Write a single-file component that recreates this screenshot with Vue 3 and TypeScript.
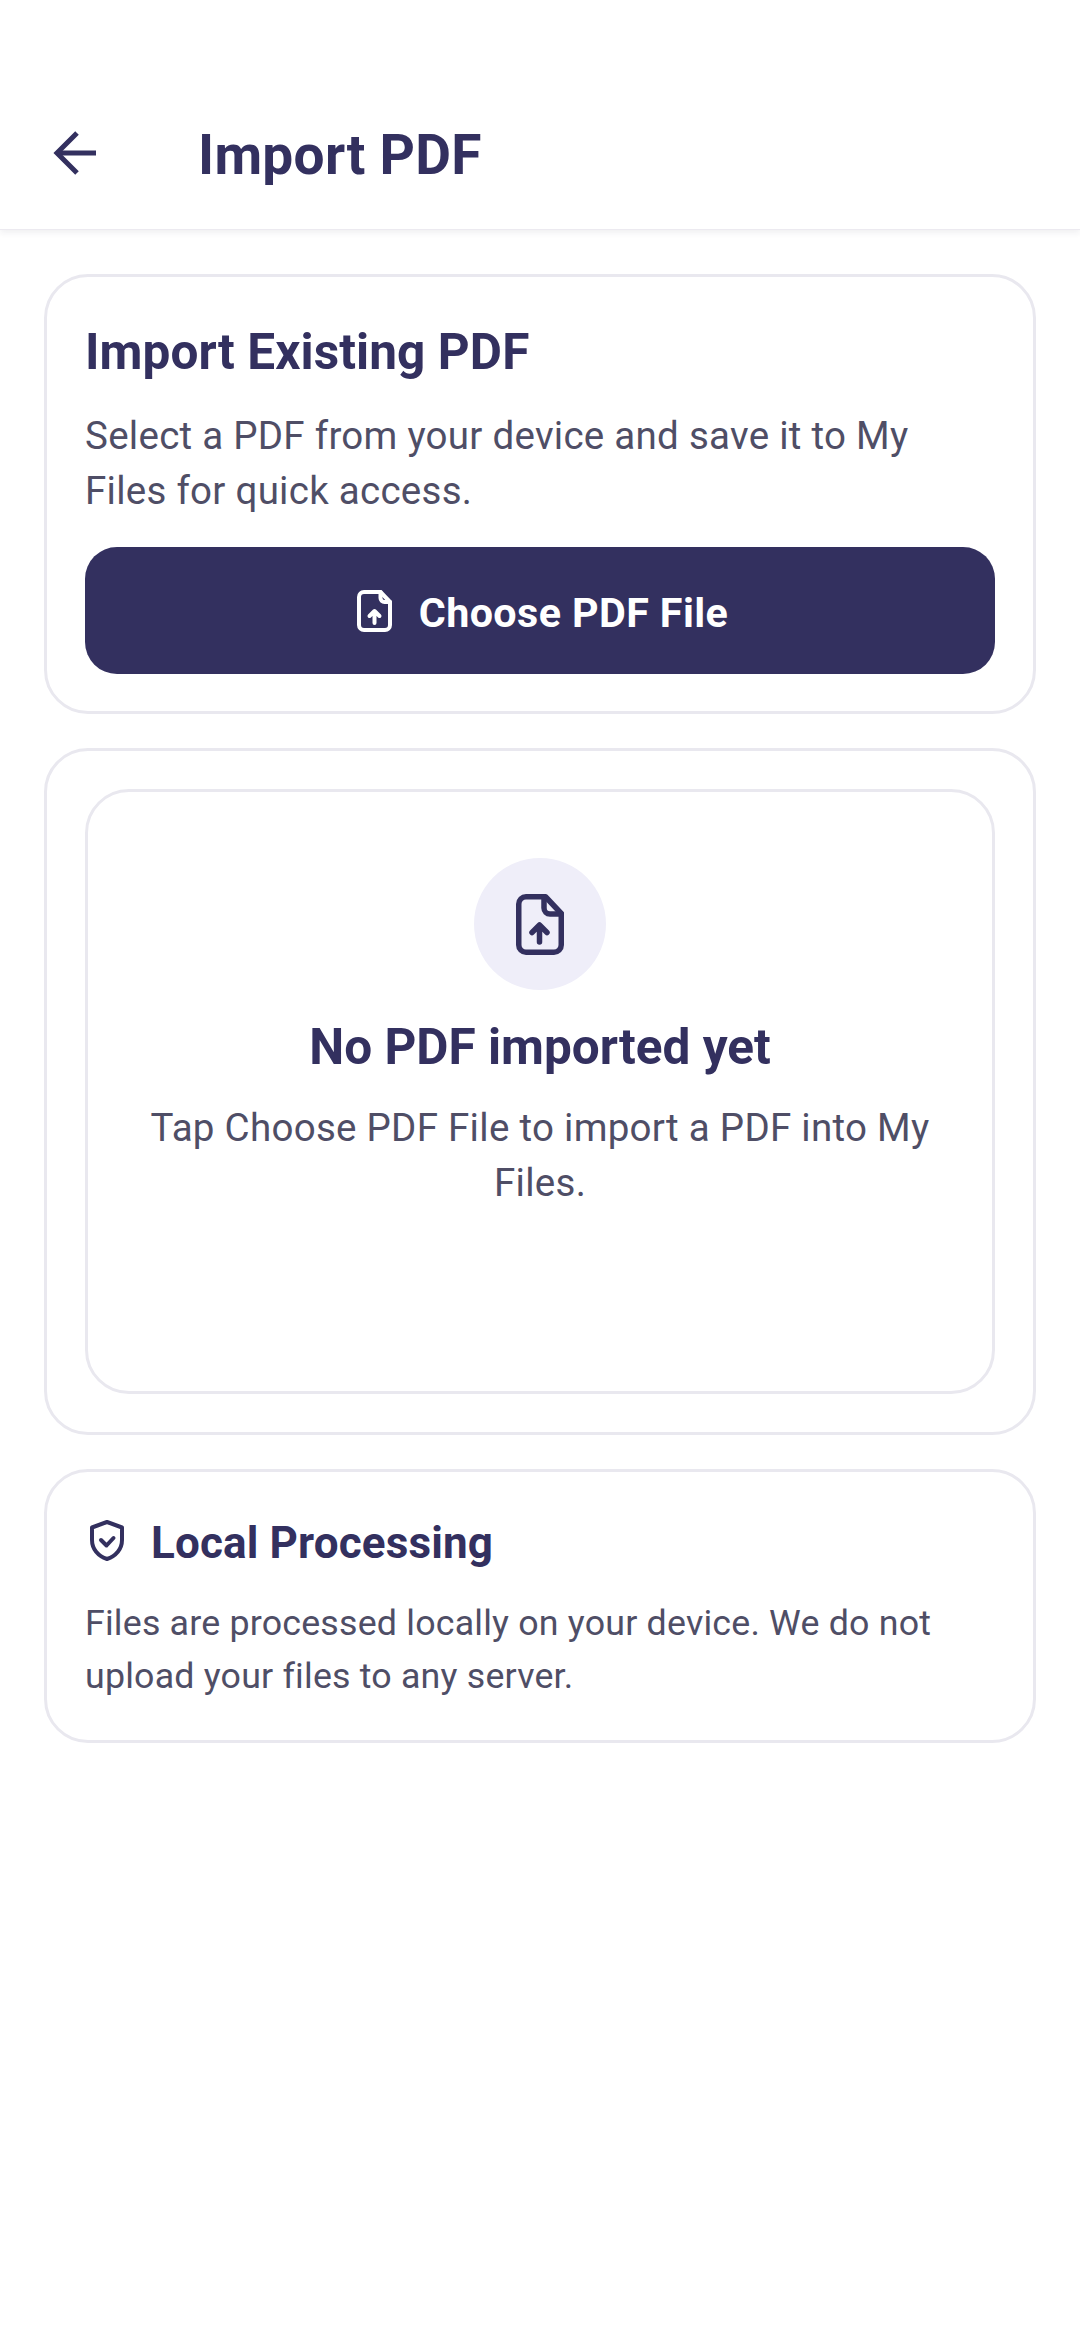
<template>
  <div class="screen">
    <header class="appBar">
      <button class="backBtn" aria-label="Back">
        <svg width="66" height="66" viewBox="0 0 66 66" fill="none" stroke="#33305f" stroke-width="5">
          <path d="M54 33H15" />
          <path d="M35 13 15 33 35 53" />
        </svg>
      </button>
      <h1 class="appBar__title">Import PDF</h1>
    </header>

    <main class="content">
      <section class="card card--import">
        <h2 class="card__title">Import Existing PDF</h2>
        <p class="card__text">Select a PDF from your device and save it to My Files for quick access.</p>
        <button class="primaryBtn">
          <svg width="35" height="42" viewBox="0 0 35 42" fill="none" stroke="#fff" stroke-width="4" stroke-linejoin="round" stroke-linecap="round">
            <path d="M7 2h16.500L33 12v23a5 5 0 0 1-5 5H7a5 5 0 0 1-5-5V7a5 5 0 0 1 5-5Z" />
            <path d="M23.500 2v6a4 4 0 0 0 4 4H33" />
            <path d="M17.500 33V22M12.500 26l5-5 5 5" />
          </svg>
          <span class="primaryBtn__label">Choose PDF File</span>
        </button>
      </section>

      <section class="card">
        <div class="emptyBox">
          <div class="emptyBox__icon">
            <svg width="48" height="61" viewBox="0 0 48 61" fill="none" stroke="#33305f" stroke-width="5.500" stroke-linejoin="round" stroke-linecap="round">
              <path d="M10 2.750h19.500L45.250 19.500V51a7.250 7.250 0 0 1-7.250 7.250H10A7.250 7.250 0 0 1 2.750 51V10A7.250 7.250 0 0 1 10 2.750Z" />
              <path d="M28 2.750V14a6 6 0 0 0 6 6h11.250" />
              <path d="M23.500 48V32M16 38.500l7.500-7.500 7.500 7.500" />
            </svg>
          </div>
          <h2 class="emptyBox__title">No PDF imported yet</h2>
          <p class="emptyBox__text">Tap Choose PDF File to import a PDF into My Files.</p>
        </div>
      </section>

      <section class="card card--info">
        <div class="infoHead">
          <svg class="infoHead__icon" width="34" height="41" viewBox="0 0 34 41" fill="none" stroke="#33305f" stroke-width="4" stroke-linejoin="round" stroke-linecap="round">
            <path d="M17 2 32 7.500V20c0 9-6 16-15 19C8 36 2 29 2 20V7.500Z" />
            <path d="m11 20 5.500 5.500L23.500 18" />
          </svg>
          <h3 class="infoHead__title">Local Processing</h3>
        </div>
        <p class="card__text card__text--small">Files are processed locally on your device. We do not upload your files to any server.</p>
      </section>
    </main>
  </div>
</template>

<script setup lang="ts">
</script>

<style>
html,
body {
  background: #fff;
}
</style>

<style scoped>
.screen {
  width: 1080px;
  height: 2340px;
  background: #fff;
  font-family: Roboto, "Liberation Sans", sans-serif;
  color: #33305f;
}

.appBar {
  display: flex;
  align-items: center;
  height: 230px;
  padding: 76px 0 0 42px;
  box-sizing: border-box;
  background: #fff;
  border-bottom: 1px solid #eceaf0;
  box-shadow: 0 3px 6px rgba(40, 40, 70, 0.07);
}

.backBtn {
  display: flex;
  padding: 0;
  border: 0;
  background: none;
}

.appBar__title {
  margin: 4px 0 0 90px;
  font-size: 55px;
  line-height: 64px;
  letter-spacing: 0.3px;
  font-weight: 700;
}

.content {
  display: flex;
  flex-direction: column;
  gap: 34px;
  padding: 44px 44px 0;
}

.card {
  padding: 38px;
  border: 3px solid #e9e8ef;
  border-radius: 44px;
  background: #fff;
}

.card--import {
  padding-top: 39.500px;
  padding-bottom: 37px;
}

.card--info {
  padding-top: 40px;
}

.card__title {
  margin: 0;
  font-size: 49.500px;
  line-height: 70px;
  letter-spacing: 0.1px;
  font-weight: 700;
}

.card__text {
  margin: 21.500px 0 0;
  font-size: 38.500px;
  line-height: 55px;
  letter-spacing: 0.27px;
  color: #4f4e66;
}

.card__text--small {
  margin-top: 23px;
  font-size: 35.750px;
  line-height: 52.500px;
  letter-spacing: 0.2px;
}

.primaryBtn {
  display: flex;
  align-items: center;
  justify-content: center;
  gap: 27px;
  width: 100%;
  height: 127px;
  margin-top: 29px;
  padding: 0 0 0 5px;
  border: 0;
  border-radius: 32px;
  background: #33305f;
  color: #fff;
  font-family: inherit;
  font-size: 41.250px;
  letter-spacing: 0.4px;
  font-weight: 700;
}

.primaryBtn__label {
  margin-top: 4px;
}

.emptyBox {
  display: flex;
  flex-direction: column;
  align-items: center;
  height: 605px;
  padding: 66px 60px 0;
  box-sizing: border-box;
  border: 3px solid #e9e8ef;
  border-radius: 44px;
  text-align: center;
}

.emptyBox__icon {
  display: flex;
  align-items: center;
  justify-content: center;
  width: 132px;
  height: 132px;
  border-radius: 50%;
  background: #efeef9;
}

.emptyBox__title {
  margin: 26.500px 0 0;
  font-size: 49.500px;
  line-height: 60px;
  font-weight: 700;
}

.emptyBox__text {
  margin: 23.500px 0 0;
  font-size: 38.500px;
  line-height: 55px;
  letter-spacing: 0.28px;
  color: #4f4e66;
}

.infoHead {
  display: flex;
  align-items: center;
  gap: 27px;
}

.infoHead__icon {
  margin: 0 0 5px 5px;
}

.infoHead__title {
  margin: 0;
  font-size: 44px;
  line-height: 62px;
  letter-spacing: 0.15px;
  font-weight: 700;
}
</style>
